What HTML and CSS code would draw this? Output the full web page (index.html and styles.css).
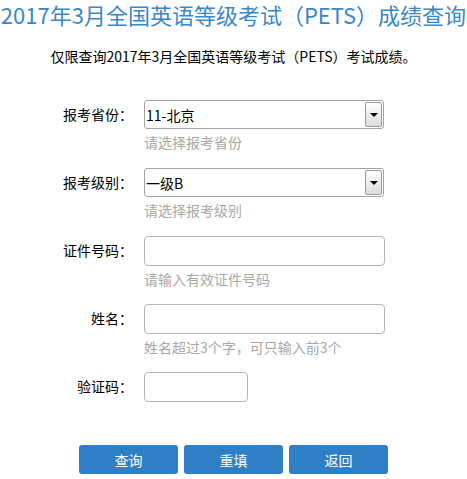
FILE: index.html
```html
<!DOCTYPE html>
<html lang="zh-CN">
<head>
    <meta charset="UTF-8">
    <meta name="viewport" content="width=device-width, initial-scale=1.0">
    <title>PETS成绩查询</title>
    <link rel="stylesheet" href="styles.css">
</head>
<body>
    <h1 class="title">2017年3月全国英语等级考试（PETS）成绩查询</h1>
    <p class="notice">仅限查询2017年3月全国英语等级考试（PETS）考试成绩。</p>

    <form class="query-form">
        <div class="row">
            <label class="label" for="province">报考省份<span class="colon">：</span></label>
            <div class="field">
                <div class="select-box">
                    <select id="province" name="province">
                        <option>11-北京</option>
                    </select>
                    <span class="arrow"></span>
                </div>
                <div class="hint">请选择报考省份</div>
            </div>
        </div>
        <div class="row">
            <label class="label" for="level">报考级别<span class="colon">：</span></label>
            <div class="field">
                <div class="select-box">
                    <select id="level" name="level">
                        <option>一级B</option>
                    </select>
                    <span class="arrow"></span>
                </div>
                <div class="hint">请选择报考级别</div>
            </div>
        </div>
        <div class="row">
            <label class="label" for="idno">证件号码<span class="colon">：</span></label>
            <div class="field">
                <input type="text" id="idno" name="idno" class="text-input">
                <div class="hint">请输入有效证件号码</div>
            </div>
        </div>
        <div class="row">
            <label class="label" for="name">姓名<span class="colon">：</span></label>
            <div class="field">
                <input type="text" id="name" name="name" class="text-input">
                <div class="hint">姓名超过3个字，可只输入前3个</div>
            </div>
        </div>
        <div class="row row-last">
            <label class="label" for="code">验证码<span class="colon">：</span></label>
            <div class="field">
                <input type="text" id="code" name="code" class="text-input code-input">
            </div>
        </div>
        <div class="buttons">
            <button type="submit" class="btn">查询</button>
            <button type="reset" class="btn">重填</button>
            <button type="button" class="btn">返回</button>
        </div>
    </form>
</body>
</html>
```

FILE: styles.css
```css
body {
    margin: 0;
    padding: 0;
    background-color: #fff;
    font-family: "Noto Sans CJK SC", sans-serif;
    color: #000;
    text-spacing-trim: space-all;
}
.title {
    margin: 0;
    padding-top: 1px;
    font-size: 22px;
    font-weight: normal;
    line-height: 26px;
    color: #3b87c9;
    white-space: nowrap;
    text-align: center;
}
.notice {
    margin: 19px 0 0 0;
    font-size: 14px;
    line-height: 20px;
    text-align: center;
}
.query-form {
    margin-top: 34px;
}
.row {
    display: flex;
    height: 68px;
}
.row-last {
    height: 73px;
}
.label {
    width: 133px;
    margin-right: 11px;
    font-size: 14px;
    line-height: 29px;
    text-align: right;
}
/* centred colon like the original font */
.colon {
    font-family: "Noto Sans CJK TC", sans-serif;
}
.field {
    display: flex;
    flex-direction: column;
}
.select-box {
    display: flex;
    width: 238px;
    height: 27px;
    border: 1px solid #a3a3a3;
    border-radius: 3px;
    background-color: #fff;
}
.select-box select {
    flex: 1;
    border: none;
    outline: none;
    background: transparent;
    appearance: none;
    -webkit-appearance: none;
    padding: 0 0 0 1px;
    font-family: inherit;
    font-size: 14px;
    color: #000;
}
.arrow {
    display: flex;
    align-items: center;
    justify-content: center;
    width: 15px;
    margin: 1px 1px 1px 0;
    border: 1px solid #9a9a9a;
    border-radius: 2px;
    background: linear-gradient(#ffffff, #dcdcdc);
}
.arrow::before {
    content: "";
    border-left: 4px solid transparent;
    border-right: 4px solid transparent;
    border-top: 4px solid #000;
}
.text-input {
    box-sizing: border-box;
    width: 241px;
    height: 30px;
    padding: 0 6px;
    border: 1px solid #b5b5b5;
    border-radius: 4px;
    font-family: inherit;
    font-size: 14px;
}
.code-input {
    width: 104px;
}
.hint {
    margin-top: 3px;
    font-size: 14px;
    line-height: 20px;
    color: #a8a8a8;
}
.buttons {
    display: flex;
    gap: 6px;
    margin-left: 79px;
}
.btn {
    width: 99px;
    height: 29px;
    padding: 0;
    border: none;
    border-radius: 3px;
    background-color: #2f7fc6;
    color: #fff;
    font-family: inherit;
    font-size: 14px;
    cursor: pointer;
}
```
